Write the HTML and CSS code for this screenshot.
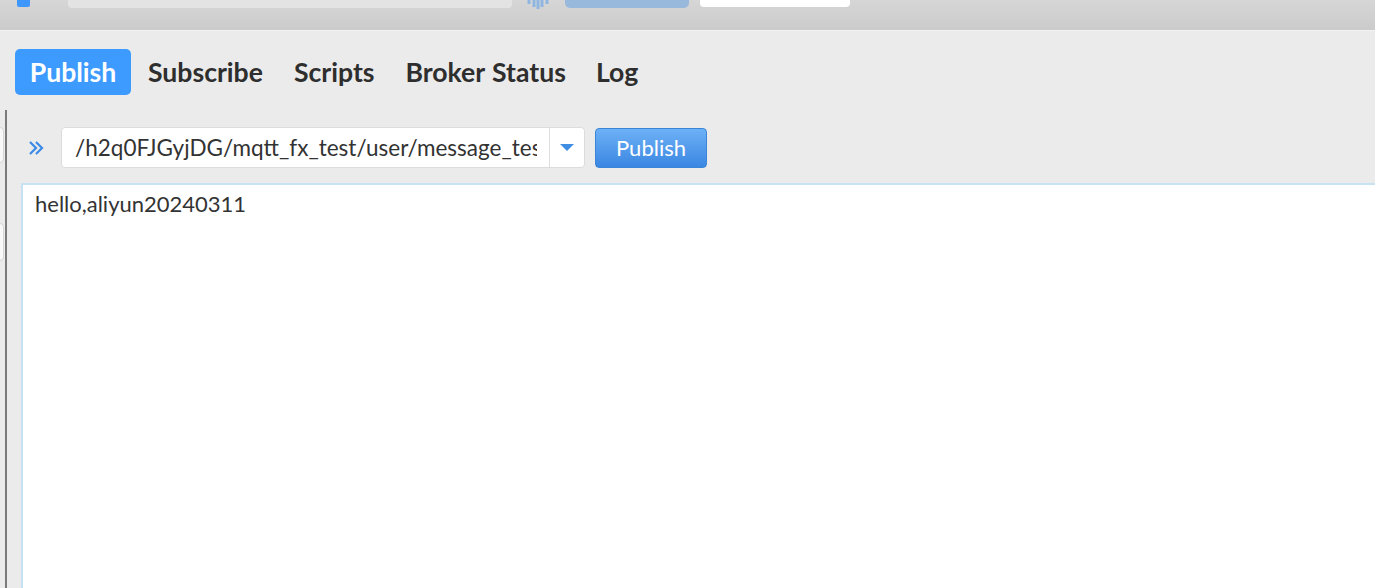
FILE: index.html
```html
<!DOCTYPE html>
<html>
<head>
<meta charset="utf-8">
<link rel="stylesheet" href="styles.css">
</head>
<body>
<div class="toolbar">
  <div class="tb-square"></div>
  <div class="tb-input"></div>
  <svg class="tb-icon" width="26" height="10" viewBox="0 0 26 10"><path d="M4 0v4M9 0v7M13 0v9M17 0v7M22 0v4" stroke="#8fb6e0" stroke-width="3" fill="none"/></svg>
  <div class="tb-button"></div>
  <div class="tb-white"></div>
</div>
<div class="main">
  <nav class="tabs">
    <span class="tab active">Publish</span>
    <span class="tab">Subscribe</span>
    <span class="tab">Scripts</span>
    <span class="tab">Broker Status</span>
    <span class="tab">Log</span>
  </nav>
  <div class="content">
    <div class="left-edge">
      <div class="stub stub1"></div>
      <div class="stub stub2"></div>
    </div>
    <div class="panel">
      <div class="pub-row">
        <svg class="chev" width="18" height="16" viewBox="0 0 18 16"><path d="M3 2l6 6-6 6M9 2l6 6-6 6" stroke="#3b8ae6" stroke-width="2.2" fill="none"/></svg>
        <div class="combo">
          <span class="combo-text">/h2q0FJGyjDG/mqtt_fx_test/user/message_test</span>
          <span class="combo-arrow"><svg width="14" height="8" viewBox="0 0 14 8"><path d="M0 0h14L7 7z" fill="#3f8ee4"/></svg></span>
        </div>
        <button class="pub-btn">Publish</button>
      </div>
      <div class="editor">hello,aliyun20240311</div>
    </div>
  </div>
</div>
</body>
</html>
```
FILE: styles.css
```css
* { box-sizing: border-box; }
html, body { margin: 0; padding: 0; height: 100%; overflow: hidden; }
body {
  background: #ebebeb;
  font-family: Lato, "Open Sans", sans-serif;
  color: #333;
}
.toolbar {
  height: 31px;
  background: linear-gradient(#d6d6d6, #cbcbcb);
  border-bottom: 1px solid #f3f3f3;
  display: flex;
  align-items: flex-start;
  position: relative;
}
.tb-square { margin-left: 17px; width: 13px; height: 7px; background: #3d97ff; border-radius: 0 0 2px 2px; }
.tb-input { margin-left: 38px; width: 444px; height: 8px; background: #e3e3e3; border-radius: 0 0 4px 4px; }
.tb-icon { margin-left: 13px; }
.tb-button { margin-left: 14px; width: 124px; height: 8px; background: #99b9dc; border-radius: 0 0 5px 5px; }
.tb-white { margin-left: 11px; width: 150px; height: 7px; background: #fff; border-radius: 0 0 4px 4px; }

.main { height: calc(100% - 31px); display: flex; flex-direction: column; }
.tabs {
  display: flex;
  align-items: center;
  padding: 18px 0 0 15px;
}
.tab {
  font-weight: 700;
  font-size: 26.6px;
  color: #2e2e2e;
  padding: 7px 15px 7px;
  line-height: 32px;
  border-radius: 5px;
  word-spacing: 1px;
}
.tab.active { background: #3d9bff; color: #fff; width: 116px; text-align: center; padding: 7px 0; }
.tab:nth-child(2) { margin-left: 2px; }
.tab:nth-child(3) { margin-left: 1px; }
.tab:nth-child(4) { margin-left: 1px; }
.tab:nth-child(5) { margin-left: 0; }

.content { flex: 1; display: flex; margin-top: 15px; }
.left-edge {
  width: 21px;
  position: relative;
}
.left-edge::before {
  content: "";
  position: absolute;
  left: 5px; top: 0; bottom: 0;
  width: 2px;
  background: #7a7a7a;
}
.stub {
  position: absolute;
  left: -5px;
  width: 9px;
  background: #f8f8f8;
  border: 1px solid #d6d6d6;
  border-radius: 4px;
}
.stub1 { top: 17px; height: 36px; }
.stub2 { top: 113px; height: 38px; }
.panel { flex: 1; display: flex; flex-direction: column; min-width: 0; }
.pub-row { display: flex; align-items: center; height: 41px; margin-top: 17px; }
.chev { margin-left: 6px; }
.combo {
  margin-left: 16px;
  width: 524px;
  height: 41px;
  background: #fff;
  border: 1px solid #dcdcdc;
  border-radius: 4px;
  display: flex;
  align-items: center;
  overflow: hidden;
}
.combo-text {
  flex: 1;
  min-width: 0;
  white-space: nowrap;
  overflow: hidden;
  font-size: 22.5px;
  color: #333;
  padding-left: 13px;
  margin-right: 12px;
}
.combo-arrow {
  width: 35px;
  height: 100%;
  border-left: 1px solid #dedede;
  display: flex;
  align-items: center;
  justify-content: center;
}
.pub-btn {
  margin-left: 10px;
  width: 112px;
  height: 40px;
  border: 1px solid #3a85d8;
  border-radius: 4px;
  background: linear-gradient(#6db1f6, #3a86e2);
  color: #fff;
  font-family: Lato, sans-serif;
  font-size: 22px;
  padding: 0;
}
.editor {
  margin-top: 15px;
  flex: 1;
  background: #fff;
  border: 2px solid #c7e2f3;
  border-right: none;
  border-bottom: none;
  padding: 5px 12px;
  font-size: 22px;
  color: #333;
}
```
